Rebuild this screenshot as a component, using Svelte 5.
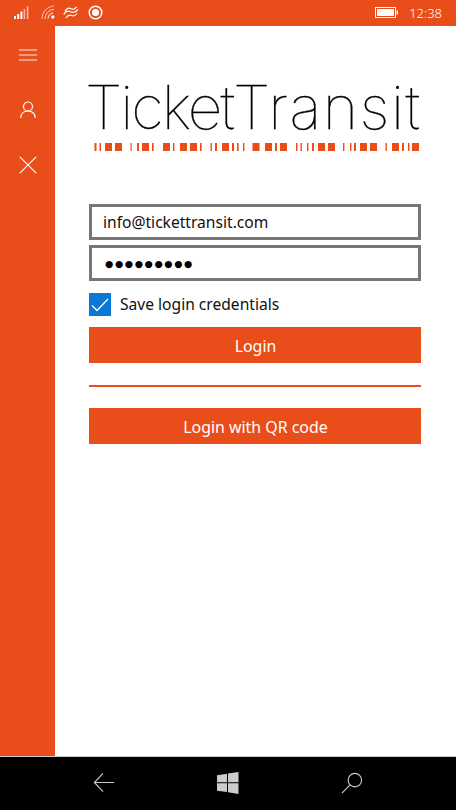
<script>
  const bars = [[94.5,2],[99.5,1.5],[105,7],[115,7],[130.5,1.2],[137,2],[142,7],[152,1.6],[163,7],[173,1.4],[180,7],[190,7],[200,1.6],[210.5,1.4],[215,2],[222,7],[232,2],[237,1.6],[243,1.4],[252.5,7],[265,7],[275,2],[280,7],[296,1.4],[300.5,1.4],[307,1.4],[312,2],[318,7],[328,7],[343,1.4],[350,1.4],[354,2],[360,7],[370,7],[385.5,1.4],[392,7],[402,2],[408,1.4],[412,7]];
</script>

<div class="phone">
  <header class="status">
    <div class="status-left">
      <svg width="16" height="14" viewBox="0 0 16 14" fill="#fff">
        <rect x="0" y="10" width="2" height="3" /><rect x="3.2" y="8" width="2" height="5" /><rect x="6.4" y="5.5" width="2" height="7.5" />
        <rect x="9.6" y="3" width="1.6" height="10" opacity=".6" /><rect x="12.8" y="0.5" width="1.6" height="12.5" opacity=".6" />
      </svg>
      <svg class="wifi" width="16" height="15" viewBox="0 0 16 15" fill="none" stroke="#fff">
        <path d="M1 14C1 7 6 1.500 13 1" opacity=".65" />
        <path d="M4 14C4 9 8 4.500 13 4.500" opacity=".75" />
        <path d="M7 13.500C7 10.500 9.500 8 12 8" />
        <circle cx="11.800" cy="12" r="1.700" fill="#fff" stroke="none" />
      </svg>
      <svg class="waves" width="16" height="13" viewBox="0 0 16 13" fill="none" stroke="#fff" stroke-width="1.200">
        <path d="M2 5.500C3.500 2.500 5.500 1.500 7.500 2.500S11 4 13.500 .8" />
        <path d="M.8 8.500C2.500 5.500 5 4.500 7.500 5.800S12 7 15 3.500" />
        <path d="M3 12C4.500 9.500 6.500 8.500 8.500 9.500S12 10 14 7.500" />
      </svg>
      <svg class="rec" width="15" height="15" viewBox="0 0 15 15">
        <circle cx="7.500" cy="7.500" r="6.300" fill="none" stroke="#fff" stroke-width="1.500" />
        <circle cx="7.500" cy="7.500" r="3.600" fill="#fff" />
      </svg>
    </div>
    <div class="status-right">
      <svg width="23" height="11" viewBox="0 0 23 11" fill="none">
        <rect x="0.500" y="0.500" width="20" height="10" stroke="#fff" />
        <rect x="2" y="2" width="17" height="7" fill="#fff" />
        <rect x="21.500" y="3.500" width="1.500" height="4" fill="#fff" />
      </svg>
      <span class="time">12:38</span>
    </div>
  </header>

  <div class="body">
    <nav class="rail">
      <svg width="18" height="12" viewBox="0 0 18 12" stroke="#fff" opacity=".9"><path d="M0 1H18M0 6H18M0 11H18" /></svg>
      <svg class="user" width="16" height="18" viewBox="0 0 16 18" fill="none" stroke="#fff" stroke-width="1.200">
        <circle cx="8" cy="5.500" r="4.500" />
        <path d="M.8 17C.8 12.500 4 10 8 10s7.200 2.500 7.200 7" />
      </svg>
      <svg class="close" width="18" height="18" viewBox="0 0 18 18" stroke="#fff" stroke-width="1.200"><path d="M.8.800 17.200 17.200M17.200.800 .8 17.200" /></svg>
    </nav>

    <main class="content">
      <h1 class="logo"><span class="w1">Ticket</span><span class="w2">Transit</span></h1>
      <svg class="barcode" width="332" height="8" viewBox="89 0 332 8" fill="#e94d1a">
        {#each bars as [x, w]}<rect {x} y="0" width={w} height="8" />{/each}
      </svg>

      <div class="field">info@tickettransit.com</div>
      <div class="field pass">●●●●●●●●●</div>

      <div class="check">
        <span class="box">
          <svg width="18" height="14" viewBox="0 0 18 14" fill="none" stroke="#fff" stroke-width="1.300"><path d="M1 7.500 6 12.500 17 1" /></svg>
        </span>
        <span class="label">Save login credentials</span>
      </div>

      <div class="btn login">Login</div>
      <hr />
      <div class="btn">Login with QR code</div>
    </main>
  </div>

  <footer class="nav">
    <svg width="22" height="21" viewBox="0 0 24 22" fill="none" stroke="#ccc" stroke-width="1.200"><path d="M23 11H2M11 1 1.500 11 11 21" /></svg>
    <svg width="22" height="22" viewBox="0 0 22 22" fill="#ccc"><path d="M0 3.200 10 1.800V10.300H0ZM11 1.600 21.500 0V10.300H11ZM0 11.300H10V20L0 18.700ZM11 11.300H21.500V22L11 20.300Z" /></svg>
    <svg width="22" height="22" viewBox="0 0 23 23" fill="none" stroke="#ccc" stroke-width="1.200"><circle cx="14.500" cy="8.500" r="7" /><path d="M9.500 13.500 1 22" /></svg>
  </footer>
</div>

<style>
  :global(body) { margin: 0; background: #fff; }
  .phone {
    width: 456px; height: 810px; display: flex; flex-direction: column;
    font-family: "Noto Sans", "Open Sans", sans-serif; background: #e94d1a; overflow: hidden;
  }
  .status {
    height: 26px; flex: none; display: flex; justify-content: space-between; align-items: center;
    padding: 0 14px 1px 14px; box-sizing: border-box; color: #fff;
  }
  .status-left { display: flex; align-items: center; }
  .wifi { margin-left: 11px; }
  .waves { margin-left: 6px; }
  .rec { margin-left: 9px; }
  .status-right { display: flex; align-items: center; gap: 11px; }
  .time { font-size: 13px; font-weight: 300; }
  .body { flex: 1; display: flex; min-height: 0; }
  .rail {
    width: 55px; flex: none; display: flex; flex-direction: column; align-items: center; padding-top: 23px; box-sizing: border-box;
  }
  .user { margin-top: 40px; }
  .close { margin-top: 37px; }
  .content {
    flex: 1; min-width: 0; background: #fff; padding: 51px 35px 0 34px; display: flex; flex-direction: column;
  }
  .logo {
    margin: 0 0 0 -4px; font: 100 60.500px/1 Inter, sans-serif; color: #000; white-space: nowrap; height: 66px;
    -webkit-text-stroke: 0.350px #000;
  }
  .w1 { letter-spacing: -2px; }
  .w2 { letter-spacing: 1.500px; }
  .barcode { display: block; }
  .field {
    height: 36px; box-sizing: border-box; border: 3px solid #777; padding-left: 11px;
    display: flex; align-items: center; font-size: 15.600px; color: #111;
  }
  .logo + .barcode + .field { margin-top: 53px; }
  .pass { margin-top: 5px; padding-left: 13px; font: 9.500px "DejaVu Sans", sans-serif; letter-spacing: 1.600px; color: #000; }
  .check { display: flex; align-items: center; gap: 9px; margin-top: 12px; font-size: 15.600px; color: #111; }
  .label { margin-top: -2px; }
  .box { width: 22px; height: 23px; background: #0a78d7; display: flex; align-items: center; justify-content: center; }
  .btn {
    height: 36px; background: #e94d1a; color: #fff; display: flex; align-items: center; justify-content: center; font-size: 15.900px; padding: 2px 0 0 1px; box-sizing: border-box;
  }
  .login { margin-top: 11px; }
  hr { border: 0; height: 1.500px; background: #e94d1a; margin: 22px 0 21px; }
  .nav {
    height: 54px; flex: none; background: #000; border-top: 1px solid #ccc; box-sizing: border-box;
    display: flex; align-items: center; justify-content: space-between; padding: 0 93px 2px;
  }
</style>
